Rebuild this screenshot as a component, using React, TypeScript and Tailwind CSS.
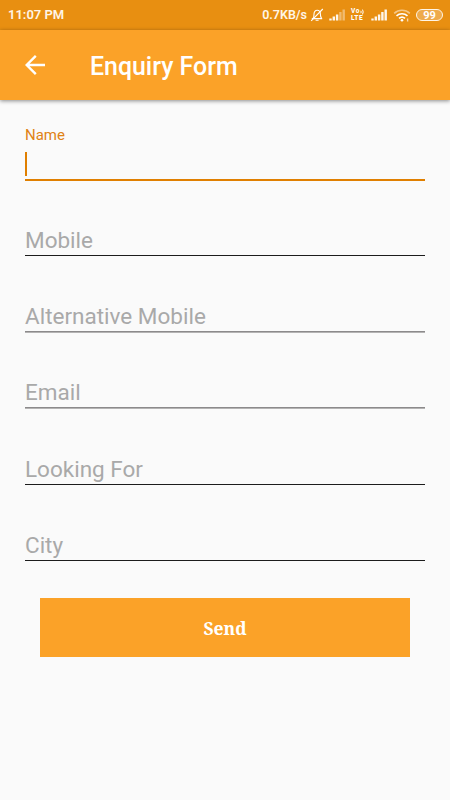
import React, { FC } from "react";

interface FieldProps {
  label: string;
  className: string;
}

interface SignalProps {
  strength: number;
  className?: string;
}

const Signal: FC<SignalProps> = ({ strength, className }) => (
  <svg width="17" height="12" viewBox="0 0 17 12" className={className}>
    {[2, 4, 6, 8.5, 11].map((height, i) => (
      <rect
        key={height}
        x={i * 3.3 + 0.3}
        y={11.5 - height}
        width="2.4"
        height={height}
        fill="#fff"
        opacity={i < strength ? 0.92 : 0.4}
      />
    ))}
  </svg>
);

const BellOff: FC = () => (
  <svg
    width="14"
    height="14"
    viewBox="0 0 14 14"
    fill="none"
    stroke="#fff"
    strokeWidth="1.1"
    className="ml-[3px]"
  >
    <path d="M1.800 10.600h10.400M3 10.300c.8-.8 1-1.700 1-4C4 3.900 5.200 2.300 7.200 2.300s3.200 1.600 3.200 4c0 2.300.3 3.200 1.200 4" />
    <path d="M5.600 12.300h3M12.800 1L1.200 12.800" />
  </svg>
);

const Wifi: FC = () => (
  <svg
    width="18"
    height="13"
    viewBox="0 0 18 13"
    fill="none"
    stroke="#fff"
    strokeWidth="1.6"
    className="ml-[5px]"
  >
    <path d="M1.200 4.300C5.700.3 12.300.3 16.800 4.300" opacity="0.5" />
    <path d="M3.500 6.900c3.200-2.900 7.800-2.900 11 0M6 9.400c1.800-1.600 4.200-1.600 6 0" />
    <circle cx="9" cy="11.300" r="1.300" fill="#fff" stroke="none" />
    <path d="M14.600 9.500v3" strokeWidth="1.400" opacity="0.65" />
  </svg>
);

const StatusBar: FC = () => (
  <div className="flex h-[30px] items-center bg-[#e88f11] pr-[7px] pl-[8px] text-[13px] font-semibold text-[#fff5e6]">
    <span className="flex-1">11:07 PM</span>
    <span className="text-[12.5px]">0.7KB/s</span>
    <BellOff />
    <Signal strength={3} className="ml-[5px]" />
    <div className="ml-[5px] flex w-[15px] flex-col text-[6.5px] leading-[7px] font-extrabold tracking-[0.5px] text-white">
      <div className="flex items-center">
        Vo
        {/* Sound waves of the VoLTE badge */}
        <svg
          width="4"
          height="6"
          viewBox="0 0 4 6"
          fill="none"
          stroke="currentColor"
          strokeWidth="1"
        >
          <path d="M.8 1.800q.8 1.200 0 2.400M2.500.600q1.400 2.400 0 4.800" />
        </svg>
      </div>
      <div>LTE</div>
    </div>
    <Signal strength={5} className="ml-[5px]" />
    <Wifi />
    <div className="ml-[5px] flex h-[12px] w-[27px] items-center justify-center rounded-full border border-[#fff5e6] bg-white/25 text-[11px] leading-none font-bold text-white">
      99
    </div>
  </div>
);

const Field: FC<FieldProps> = ({ label, className }) => (
  <div
    className={`flex items-end pb-[1px] text-[22.5px] leading-[28px] text-[#a9a9a9] ${className}`}
  >
    {label}
  </div>
);

const App: FC = () => {
  return (
    <div className="h-[800px] w-[450px] overflow-hidden bg-[#fafafa] font-['Roboto',sans-serif]">
      <StatusBar />
      <header className="flex h-[70px] items-center bg-[#fba228] pl-[25px] text-white shadow-[0_1px_4px_rgba(0,0,0,0.45)]">
        <svg
          width="20"
          height="20"
          viewBox="0 0 20 20"
          fill="none"
          stroke="currentColor"
          strokeWidth="2.400"
        >
          <path d="M20 10H2M10.800.9L1.700 10l9.100 9.100" />
        </svg>
        <h1 className="ml-[45px] pt-[3px] text-[24.9px] leading-[30px] font-medium">
          Enquiry Form
        </h1>
      </header>

      <main className="px-[25px] pt-[25px]">
        {/* Focused field with the floating label and the caret */}
        <div className="h-[56px] border-b-2 border-[#e07f00]">
          <div className="h-[27px] text-[15px] leading-[20px] text-[#e08214]">
            Name
          </div>
          <div className="h-[24px] w-[2px] bg-[#e07f00]" />
        </div>
        <Field label="Mobile" className="h-[75px] border-b border-[#1c1c1c]" />
        <Field
          label="Alternative Mobile"
          className="mb-[1px] h-[76px] border-b border-[#8c8a8b] shadow-[0_1px_0_#b4b3b3]"
        />
        <Field
          label="Email"
          className="mb-[1px] h-[75px] border-b border-[#8c8a8b] shadow-[0_1px_0_#b4b3b3]"
        />
        <Field
          label="Looking For"
          className="h-[76px] border-b border-[#1c1c1c]"
        />
        <Field label="City" className="h-[76px] border-b border-[#1c1c1c]" />
        <button
          type="button"
          className="mx-[15px] mt-[37px] block h-[59px] w-[370px] bg-[#fba228] pt-[1px] font-['Noto_Serif','DejaVu_Serif_Condensed','DejaVu_Serif',serif] text-[17.5px] font-bold text-white"
        >
          Send
        </button>
      </main>
    </div>
  );
};

export default App;
